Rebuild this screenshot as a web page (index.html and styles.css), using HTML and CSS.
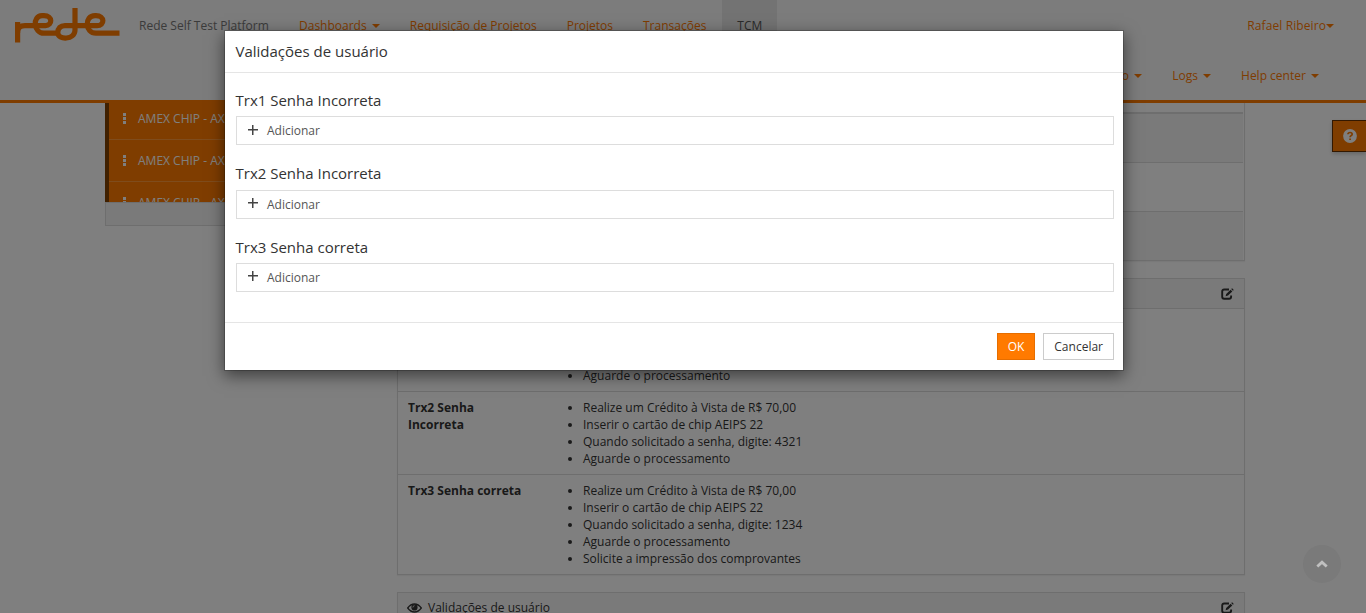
FILE: index.html
```
<!DOCTYPE html>
<html lang="pt-BR">
<head>
<meta charset="utf-8">
<title>Rede Self Test Platform</title>
<link rel="stylesheet" href="styles.css">
</head>
<body>
<svg width="0" height="0" class="symbols" aria-hidden="true">
  <symbol id="edit" viewBox="0 0 13 12">
    <path d="M8 1.5H3.2Q1.2 1.5 1.2 3.4v5.4q0 1.900 2 1.900h4.900q2 0 2-1.900V7.500" fill="none" stroke="currentColor" stroke-width="1.900"/>
    <path d="M4.600 8.300l.6-2.400L9.600 1.700l1.700 1.700L7 7.600zM10.200 1.100l.9-.9 1.700 1.700-.9.9z" fill="currentColor"/>
  </symbol>
</svg>
<header class="header">
  <div class="bar">
    <a class="logo"><svg width="105" height="36" viewBox="0 0 105 36" fill="none" stroke="currentColor" stroke-width="5.200">
      <path d="M2.600 34.500V14"/>
      <path d="M2.600 25V23.500Q3 17.600 10 17.600H30.500C37.500 17.600 38 7.700 29 7.700H27C17 7.700 18.500 25.200 29 25.200H41"/>
      <path d="M60 0V22C60 32.200 42.800 32.200 42.800 24.800C42.800 20 45.500 17.600 50 17.600H82C90 17.600 90 7.700 81 7.700H80C69 7.700 70 25.200 81 25.200H104.500"/>
    </svg></a>
    <span class="brand">Rede Self Test Platform</span>
    <nav class="nav">
      <a class="item">Dashboards <i class="caret gap"></i></a>
      <a class="item">Requisição de Projetos</a>
      <a class="item">Projetos</a>
      <a class="item">Transações</a>
      <a class="item active">TCM</a>
    </nav>
    <a class="item user">Rafael Ribeiro<i class="caret"></i></a>
  </div>
  <div class="bar second">
    <a class="item">o <i class="caret gap"></i></a>
    <a class="item">Logs <i class="caret gap"></i></a>
    <a class="item">Help center <i class="caret gap"></i></a>
  </div>
</header>
<main class="page">
  <aside class="sidebar">
    <div class="tests">
      <a class="test"><i class="dots"></i>AMEX CHIP - AX</a>
      <a class="test"><i class="dots"></i>AMEX CHIP - AX</a>
      <a class="test"><i class="dots"></i>AMEX CHIP - AX</a>
    </div>
    <div class="sidefoot"></div>
  </aside>
  <section class="content">
    <div class="panel summary">
      <div class="sumrow first"></div>
      <div class="sumrow"></div>
      <div class="sumrow last"></div>
    </div>
    <div class="panel">
      <div class="phead"><svg class="edit"><use href="#edit"/></svg></div>
      <div class="row tall"><b class="name"></b><ul class="steps"><li>Aguarde o processamento</li></ul></div>
      <div class="row"><b class="name">Trx2 Senha Incorreta</b>
        <ul class="steps"><li>Realize um Crédito à Vista de R$ 70,00</li><li>Inserir o cartão de chip AEIPS 22</li><li>Quando solicitado a senha, digite: 4321</li><li>Aguarde o processamento</li></ul></div>
      <div class="row"><b class="name">Trx3 Senha correta</b>
        <ul class="steps"><li>Realize um Crédito à Vista de R$ 70,00</li><li>Inserir o cartão de chip AEIPS 22</li><li>Quando solicitado a senha, digite: 1234</li><li>Aguarde o processamento</li><li>Solicite a impressão dos comprovantes</li></ul></div>
    </div>
    <div class="panel">
      <div class="phead">
        <svg class="eye" viewBox="0 0 15 10"><path d="M.7 5Q3.600 1 7.500 1t6.800 4Q11.400 9 7.500 9T.7 5z" fill="none" stroke="currentColor" stroke-width="1.300"/><circle cx="7.500" cy="4.400" r="3.100" fill="currentColor"/><path d="M5.900 4.500q0-1.700 1.600-1.800" fill="none" stroke="#f5f5f5" stroke-width=".8"/></svg>
        <span class="ptitle">Validações de usuário</span>
        <svg class="edit"><use href="#edit"/></svg>
      </div>
    </div>
  </section>
</main>
<a class="help"><svg width="14" height="14" viewBox="0 0 14 14"><circle cx="7" cy="7" r="6.900" fill="#fff"/><path d="M4.900 5.300Q5 3.500 7.100 3.500T9.200 5.300Q9.200 6.200 8 6.800 7.100 7.300 7.100 8.300M7.100 9.400v1.700" fill="none" stroke="#ff7a00" stroke-width="1.700"/></svg></a>
<div class="backdrop"></div>
<a class="totop"><svg width="12" height="8" viewBox="0 0 12 8"><path d="M1.300 6.500L6 2.200l4.700 4.300" fill="none" stroke="#c0c0c0" stroke-width="2.800"/></svg></a>
<div class="modal" role="dialog">
  <h4 class="mtitle">Validações de usuário</h4>
  <div class="mbody">
    <div class="group"><h5 class="label">Trx1 Senha Incorreta</h5><a class="add"><i class="plus"></i>Adicionar</a></div>
    <div class="group"><h5 class="label">Trx2 Senha Incorreta</h5><a class="add"><i class="plus"></i>Adicionar</a></div>
    <div class="group"><h5 class="label">Trx3 Senha correta</h5><a class="add"><i class="plus"></i>Adicionar</a></div>
  </div>
  <div class="mfoot"><button class="btn ok">OK</button><button class="btn cancel">Cancelar</button></div>
</div>
</body>
</html>
```
FILE: styles.css
```
* { box-sizing: border-box; }
body { margin: 0; height: 613px; overflow: hidden; background: #fff; color: #333; font: 12px/17px "Open Sans", sans-serif; }
.symbols { position: absolute; }
.header { height: 103px; background: #f8f8f8; border-bottom: 3px solid #ff7a00; color: #ff7a00; }
.bar { display: flex; height: 50px; padding-right: 17px; }
.bar.second { justify-content: flex-end; padding-right: 32px; }
.logo { width: 124px; padding: 8px 0 0 15px; }
.logo svg { display: block; }
.brand { width: 160px; padding: 17px 15px 0; color: #777; white-space: nowrap; }
.nav { display: flex; }
.item { padding: 17px 15px 0; white-space: nowrap; }
.active { margin-left: 1px; background: #e7e7e7; color: #555; }
.user { margin-left: auto; letter-spacing: .1px; }
.caret { display: inline-block; margin-bottom: 2px; border: 4px solid transparent; border-top-color: currentColor; border-bottom: 0; vertical-align: middle; }
.caret.gap { margin-left: 2px; }
.page { display: flex; align-items: flex-start; gap: 12px; height: 510px; padding-left: 105px; overflow: hidden; }
.sidebar { width: 280px; }
.tests { height: 99px; overflow: hidden; background: #ff7a00; border-left: 4px solid #804000; color: #fff; }
.test { display: flex; align-items: center; height: 42px; padding: 0 0 0 14px; border-bottom: 1px solid #ff9838; }
.test:first-child { height: 37px; padding-bottom: 5px; }
.dots { width: 3px; height: 11px; margin-right: 12px; background: repeating-linear-gradient(#fff 0 3px, transparent 3px 4px); }
.sidefoot { height: 24px; background: #f5f5f5; border: 1px solid #ddd; }
.content { width: 848px; }
.panel { margin-bottom: 17px; border: 1px solid #ddd; box-shadow: 0 1px 1px rgba(0,0,0,.05); }
.summary { height: 158px; border-top: 0; padding: 9px 1px 0 0; }
.sumrow { height: 49px; border-top: 1px solid #ddd; }
.first { height: 50px; border-top-width: 2px; background: #f5f5f5; }
.last { background: #f5f5f5; }
.phead { display: flex; align-items: center; height: 29px; padding: 0 10px 0 9px; background: #f5f5f5; }
.edit { width: 13px; height: 12px; margin-left: auto; }
.eye { width: 15px; height: 10px; margin-right: 6px; }
.row { display: flex; padding: 7px 10px; border-top: 1px solid #ddd; }
.tall { height: 83px; align-items: flex-end; }
.name { width: 135px; padding-right: 20px; font-weight: 700; }
.steps { margin: 0; padding-left: 40px; }
.help { position: absolute; right: 0; top: 120px; width: 34px; height: 32px; padding: 8px 9px 8px 10px; background: #ff7a00; border: 1px solid #663000; border-right: 0; box-shadow: 0 2px 4px rgba(0,0,0,.2); }
.help svg { display: block; }
.backdrop { position: absolute; inset: 0; background: rgba(0,0,0,.5); }
.totop { position: absolute; left: 1303px; top: 545px; display: grid; place-items: center; width: 38px; height: 38px; border-radius: 50%; background: #7a7a7a; }
.modal { position: absolute; left: 224px; top: 30px; width: 900px; height: 341px; background: #fff; background-clip: padding-box; border: 1px solid rgba(0,0,0,.2); box-shadow: 0 5px 15px rgba(0,0,0,.5); }
.mtitle { height: 42px; margin: 0; padding: 10px 10.5px 0; border-bottom: 1px solid #e5e5e5; font-size: 15px; line-height: 21px; font-weight: 400; }
.mbody { height: 249px; padding: 17px 9px 0 11px; }
.group { height: 73.5px; }
.label { margin: 0 0 6px -.5px; font-size: 15px; line-height: 20px; font-weight: 400; }
.group:nth-child(2) .label { margin-top: -.5px; margin-bottom: 6.5px; }
.add { display: flex; align-items: center; height: 29px; padding-left: 11px; border: 1px solid #ddd; color: #555; }
.plus { width: 10px; height: 10px; margin: 0 9px 2px 0; background: linear-gradient(#444,#444) center/10px 1.5px no-repeat, linear-gradient(#444,#444) center/1.5px 10px no-repeat; }
.mfoot { display: flex; justify-content: flex-end; gap: 8px; height: 48px; padding: 10px 9px 0 10px; border-top: 1px solid #e5e5e5; }
.btn { height: 27px; padding: 0 10px; border: 1px solid #ccc; background: #fff; color: #333; font: 12px/17px "Open Sans", sans-serif; }
.ok { background: #ff7a00; border-color: #e66e00; color: #fff; }
```
